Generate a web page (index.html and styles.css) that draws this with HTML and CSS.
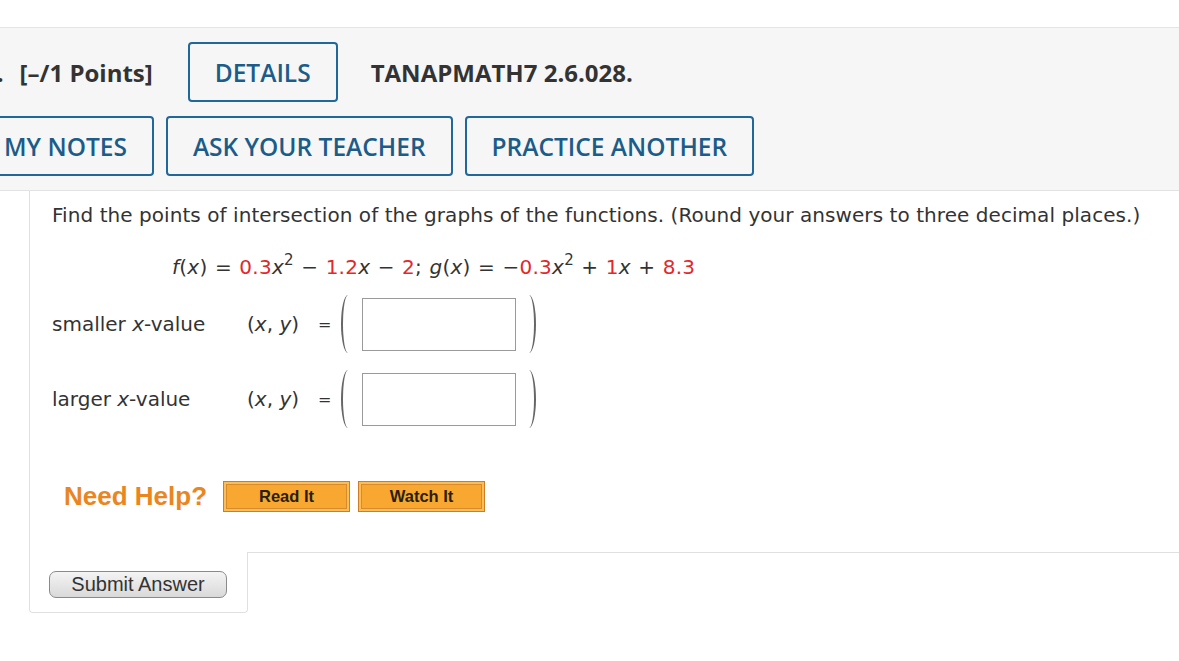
FILE: index.html
```html
<!DOCTYPE html>
<html>
<head>
<meta charset="utf-8">
<link rel="stylesheet" href="styles.css">
</head>
<body>
<div class="page">
  <div class="topband"></div>
  <div class="header">
    <div class="hrow">
      <span class="qnum">1.</span>
      <span class="points">[–/1 Points]</span>
      <span class="btn">DETAILS</span>
      <span class="code">TANAPMATH7 2.6.028.</span>
    </div>
    <div class="hrow">
      <span class="btn first">MY NOTES</span>
      <span class="btn">ASK YOUR TEACHER</span>
      <span class="btn">PRACTICE ANOTHER</span>
    </div>
  </div>
  <div class="content">
    <p class="prompt">Find the points of intersection of the graphs of the functions. (Round your answers to three decimal places.)</p>
    <p class="formula"><i>f</i>(<i>x</i>) = <span class="r">0.3</span><i>x</i><sup>2</sup> − <span class="r">1.2</span><i>x</i> − <span class="r">2</span>; <i>g</i>(<i>x</i>) = −<span class="r">0.3</span><i>x</i><sup>2</sup> + <span class="r">1</span><i>x</i> + <span class="r">8.3</span></p>
    <div class="answer">
      <span class="label">smaller <i>x</i>-value</span>
      <span class="xy">(<i>x</i>, <i>y</i>)</span>
      <span class="eq">=</span>
      <span class="paren left"></span>
      <span class="box"></span>
      <span class="paren right"></span>
    </div>
    <div class="answer">
      <span class="label">larger <i>x</i>-value</span>
      <span class="xy">(<i>x</i>, <i>y</i>)</span>
      <span class="eq">=</span>
      <span class="paren left"></span>
      <span class="box"></span>
      <span class="paren right"></span>
    </div>
    <div class="help">
      <span class="needhelp">Need Help?</span>
      <span class="hbtn">Read It</span>
      <span class="hbtn">Watch It</span>
    </div>
  </div>
  <div class="submitrow">
    <div class="submitbox"><span class="submit">Submit Answer</span></div>
    <div class="filler"></div>
  </div>
</div>
</body>
</html>
```

FILE: styles.css
```css
html, body {
  margin: 0;
  padding: 0;
  background: #fff;
  overflow: hidden;
}
.page {
  width: 1179px;
  height: 661px;
  overflow: hidden;
}
.topband {
  height: 27px;
  border-bottom: 1px solid #e4e4e4;
}
.header {
  background: #f6f6f6;
  border-bottom: 1px solid #e2e2e2;
  padding: 14px 0 14px 0;
  font-family: "Open Sans", sans-serif;
  display: flex;
  flex-direction: column;
  gap: 14px;
}
.hrow {
  display: flex;
  align-items: center;
  height: 60px;
}
.hrow:first-child {
  margin-left: -17px;
}
.qnum, .points, .code {
  font-weight: 700;
  font-size: 24px;
  color: #333;
}
.points {
  margin-left: 16px;
  margin-right: 35px;
}
.code {
  margin-left: 33px;
}
.btn {
  box-sizing: border-box;
  height: 60px;
  display: flex;
  align-items: center;
  padding: 0 25px;
  border: 2px solid #20679a;
  border-radius: 4px;
  color: #1b5c89;
  font-weight: 600;
  font-size: 24.5px;
}
.hrow .btn + .btn {
  margin-left: 12px;
}
.btn.first {
  margin-left: -23px;
}
.content {
  margin-left: 29px;
  border-left: 1px solid #e0e0e0;
  padding: 12px 0 0 22px;
  font-family: "DejaVu Sans", Verdana, sans-serif;
  font-size: 20px;
  color: #333;
  height: 349px;
}
.prompt {
  margin: 0;
  line-height: 24px;
  white-space: nowrap;
  letter-spacing: 0.06px;
}
.formula {
  margin: 28px 0 0 120px;
  line-height: 24px;
  white-space: nowrap;
  letter-spacing: 0.25px;
  word-spacing: 0.8px;
}
.formula sup {
  font-size: 15px;
  line-height: 0;
  vertical-align: 9px;
}
.r {
  color: #e3282c;
}
.answer {
  display: flex;
  align-items: center;
  height: 60px;
}
.answer:first-of-type {
  margin-top: 15px;
}
.answer + .answer {
  margin-top: 15px;
}
.label {
  width: 195px;
}
.xy {
  width: 71px;
}
.eq {
  width: 23px;
  font-size: 16px;
}
.paren {
  box-sizing: border-box;
  width: 14px;
  height: 58px;
  border-radius: 50%;
}
.paren.left {
  border-left: 2px solid #666;
  margin-right: 7px;
}
.paren.right {
  border-right: 2px solid #666;
  margin-left: 6px;
}
.box {
  box-sizing: border-box;
  width: 154px;
  height: 53px;
  border: 1px solid #9a9a9a;
  background: #fff;
}
.help {
  display: flex;
  align-items: center;
  margin: 52px 0 0 12px;
  font-family: "Liberation Sans", Arial, sans-serif;
}
.needhelp {
  font-weight: 700;
  font-size: 26px;
  color: #ea861f;
  margin-right: 16px;
}
.hbtn {
  box-sizing: border-box;
  width: 127px;
  height: 31px;
  display: flex;
  align-items: center;
  justify-content: center;
  background: #f8a830;
  border: 1px solid #cf7d25;
  box-shadow: inset 0 0 0 2px #fbbd57, inset 0 0 0 3px #d98a2a;
  font-weight: 700;
  font-size: 16.5px;
  color: #2b1e0c;
  margin-right: 8px;
}
.submitrow {
  display: flex;
  margin-left: 29px;
}
.submitbox {
  box-sizing: border-box;
  width: 219px;
  height: 61px;
  border: 1px solid #e0e0e0;
  border-top: none;
  border-radius: 0 0 4px 4px;
  padding: 19px 0 0 19px;
}
.submit {
  box-sizing: border-box;
  display: flex;
  align-items: center;
  justify-content: center;
  width: 178px;
  height: 27px;
  border: 1px solid #8a8a8a;
  border-radius: 7px;
  background: linear-gradient(#f4f4f4, #d9d9d9);
  font-family: "Liberation Sans", Arial, sans-serif;
  font-size: 20px;
  color: #333;
}
.filler {
  flex: 1;
  border-top: 1px solid #e0e0e0;
  margin-left: -1px;
}
```
